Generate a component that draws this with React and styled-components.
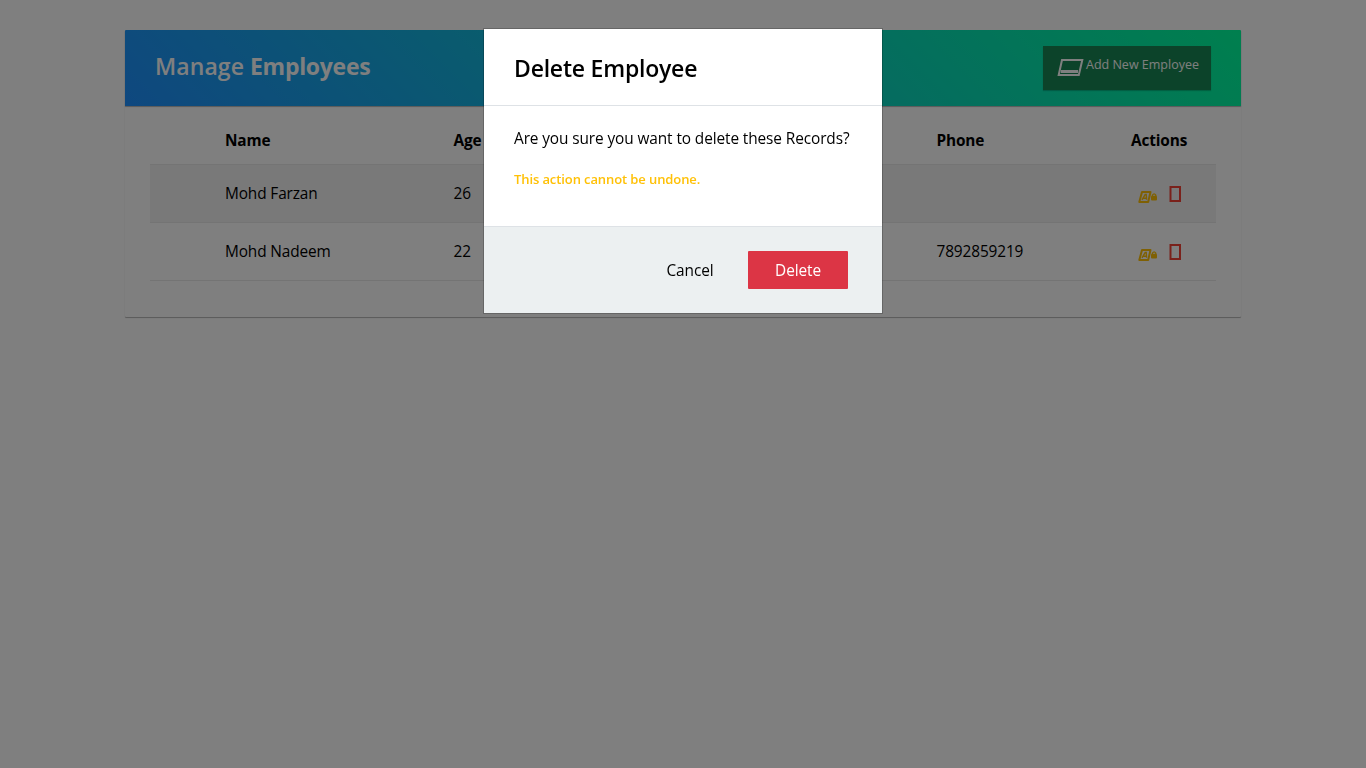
import React from "react";
import styled, { createGlobalStyle } from "styled-components";

const GlobalStyle = createGlobalStyle`
  * { box-sizing: border-box; }
  body {
    margin: 0;
    background: #fff;
    color: #000;
    font-family: "Open Sans", "Noto Sans", sans-serif;
    font-size: 15.4px;
    overflow: hidden;
  }
`;

const Page = styled.main`
  min-height: 768px;
  padding: 30px 125px;
`;

const Card = styled.section`
  width: 1116px;
  height: 287px;
  background: #fff;
  border-radius: 1px;
  box-shadow: 0 1px 1px rgba(0, 0, 0, 0.3);
`;

const CardHeader = styled.header`
  display: flex;
  justify-content: space-between;
  align-items: flex-start;
  height: 76px;
  padding: 16px 30px;
  color: #fff;
  background: linear-gradient(45deg, #1e90ff, #00ff9d);
  border-radius: 1px 1px 0 0;
  box-shadow: 0 1px 1px rgba(0, 0, 0, 0.3);
`;

const Title = styled.h2`
  margin: 4px 0 0;
  font-size: 23px;
  line-height: 32px;
  font-weight: 600;
  letter-spacing: 0.08px;
  white-space: nowrap;

  b { font-weight: 700; letter-spacing: -0.3px; }
`;

const AddButton = styled.button`
  display: flex;
  align-items: flex-start;
  width: 168px;
  height: 44px;
  padding: 12px 0 0 14px;
  border: 0;
  background: #198754;
  color: #fff;
  font: 400 12.5px/14px "Open Sans", sans-serif;
  letter-spacing: 0;
  white-space: nowrap;
  box-shadow: 0 1px 1px rgba(0, 0, 0, 0.2);

  svg { margin-right: 2px; flex: none; }
`;

const Table = styled.div`
  padding: 10px 25px 0;
`;

const Row = styled.div`
  display: grid;
  grid-template-columns: 228.5px 483px 194.5px 1fr;
  align-items: center;
  height: ${(p) => (p.$head ? 49 : 58)}px;
  padding-left: 75px;
  border-bottom: 1px solid #e9e9e9;
  background: ${(p) => (p.$striped ? "#f2f2f2" : "transparent")};
  font-weight: ${(p) => (p.$head ? 700 : 400)};
  letter-spacing: ${(p) => (p.$head ? "-0.15px" : "-0.12px")};
`;

const Cell = styled.span`
  white-space: nowrap;
`;

const Actions = styled.span`
  display: flex;
  align-items: center;
  gap: 12px;
  padding-left: 6px;
`;

const EditGlyph = styled.svg`
  margin-top: 6px;
`;

const Backdrop = styled.div`
  position: fixed;
  inset: 0;
  display: flex;
  justify-content: center;
  align-items: flex-start;
  padding-top: 29px;
  background: rgba(0, 0, 0, 0.5);
`;

const Dialog = styled.div`
  width: 398px;
  height: 284px;
  background: #fff;
  box-shadow: 0 0 0 1px rgba(0, 0, 0, 0.2);
`;

const DialogHeader = styled.div`
  height: 77px;
  padding: 23px 30px 0;
  border-bottom: 1px solid #dee2e6;
`;

const DialogTitle = styled.h4`
  margin: 0;
  font-size: 23px;
  line-height: 32px;
  font-weight: 600;
  letter-spacing: -0.22px;
`;

const DialogBody = styled.div`
  height: 120px;
  padding: 21px 30px;
`;

const Question = styled.p`
  margin: 0 0 18px;
  line-height: 24px;
  letter-spacing: -0.1px;
  white-space: nowrap;
`;

const Warning = styled.p`
  margin: 0;
  color: #ffc107;
  font-size: 13px;
  line-height: 21px;
  font-weight: 600;
  letter-spacing: -0.1px;
`;

const DialogFooter = styled.div`
  display: flex;
  justify-content: flex-end;
  height: 87px;
  padding: 24px 34px 0;
  gap: 8px;
  border-top: 1px solid #dee2e6;
  background: #ecf0f1;
`;

const DialogButton = styled.button`
  width: 100px;
  height: 38px;
  padding: 1px 0 0;
  border: 0;
  border-radius: 1px;
  background: ${(p) => (p.$danger ? "#dc3545" : "transparent")};
  color: ${(p) => (p.$danger ? "#fff" : "#000")};
  font: 400 15.4px/24px "Open Sans", sans-serif;
  letter-spacing: -0.1px;
`;

const ScreenIcon = () => (
  <svg width="27" height="19" viewBox="0 0 27 19" fill="none">
    <path d="M5 2H25.3L21.8 17H1.7Z" stroke="#fff" strokeWidth="2" />
    <path d="M3.8 13.5H21" stroke="#fff" strokeWidth="3" />
  </svg>
);

const EditIcon = () => (
  <EditGlyph width="20" height="14" viewBox="0 0 20 14" fill="none">
    <path d="M5 2H13.5L11.2 12H2.3Z" stroke="#ffc107" strokeWidth="2" strokeLinejoin="round" />
    <path d="M5 9.8L8.2 4.5H9.2L9.6 9.8M6.2 8.2H9.3" stroke="#ffc107" strokeWidth="1.4" />
    <rect x="14" y="5.8" width="6" height="4.7" rx="1" fill="#ffc107" />
    <path d="M15.4 6V5.2Q17.2 2.7 18.8 5.2V6" stroke="#ffc107" strokeWidth="1.3" />
  </EditGlyph>
);

const DeleteIcon = () => (
  <svg width="13" height="16" viewBox="0 0 13 16" fill="none">
    <rect x="1.5" y="1" width="9.5" height="14" stroke="#f44336" strokeWidth="2" />
  </svg>
);

const employees = [
  { name: "Mohd Farzan", age: 26, phone: "" },
  { name: "Mohd Nadeem", age: 22, phone: "7892859219" },
];

export default function App() {
  return (
    <>
      <GlobalStyle />
      <Page>
        <Card>
          <CardHeader>
            <Title>Manage <b>Employees</b></Title>
            <AddButton><ScreenIcon /><span>Add New Employee</span></AddButton>
          </CardHeader>
          <Table>
            <Row $head>
              <Cell>Name</Cell>
              <Cell>Age</Cell>
              <Cell>Phone</Cell>
              <Cell>Actions</Cell>
            </Row>
            {employees.map((e, i) => (
              <Row key={e.name} $striped={i % 2 === 0}>
                <Cell>{e.name}</Cell>
                <Cell>{e.age}</Cell>
                <Cell>{e.phone}</Cell>
                <Actions><EditIcon /><DeleteIcon /></Actions>
              </Row>
            ))}
          </Table>
        </Card>
      </Page>
      <Backdrop>
        <Dialog role="dialog">
          <DialogHeader><DialogTitle>Delete Employee</DialogTitle></DialogHeader>
          <DialogBody>
            <Question>Are you sure you want to delete these Records?</Question>
            <Warning>This action cannot be undone.</Warning>
          </DialogBody>
          <DialogFooter>
            <DialogButton>Cancel</DialogButton>
            <DialogButton $danger>Delete</DialogButton>
          </DialogFooter>
        </Dialog>
      </Backdrop>
    </>
  );
}
